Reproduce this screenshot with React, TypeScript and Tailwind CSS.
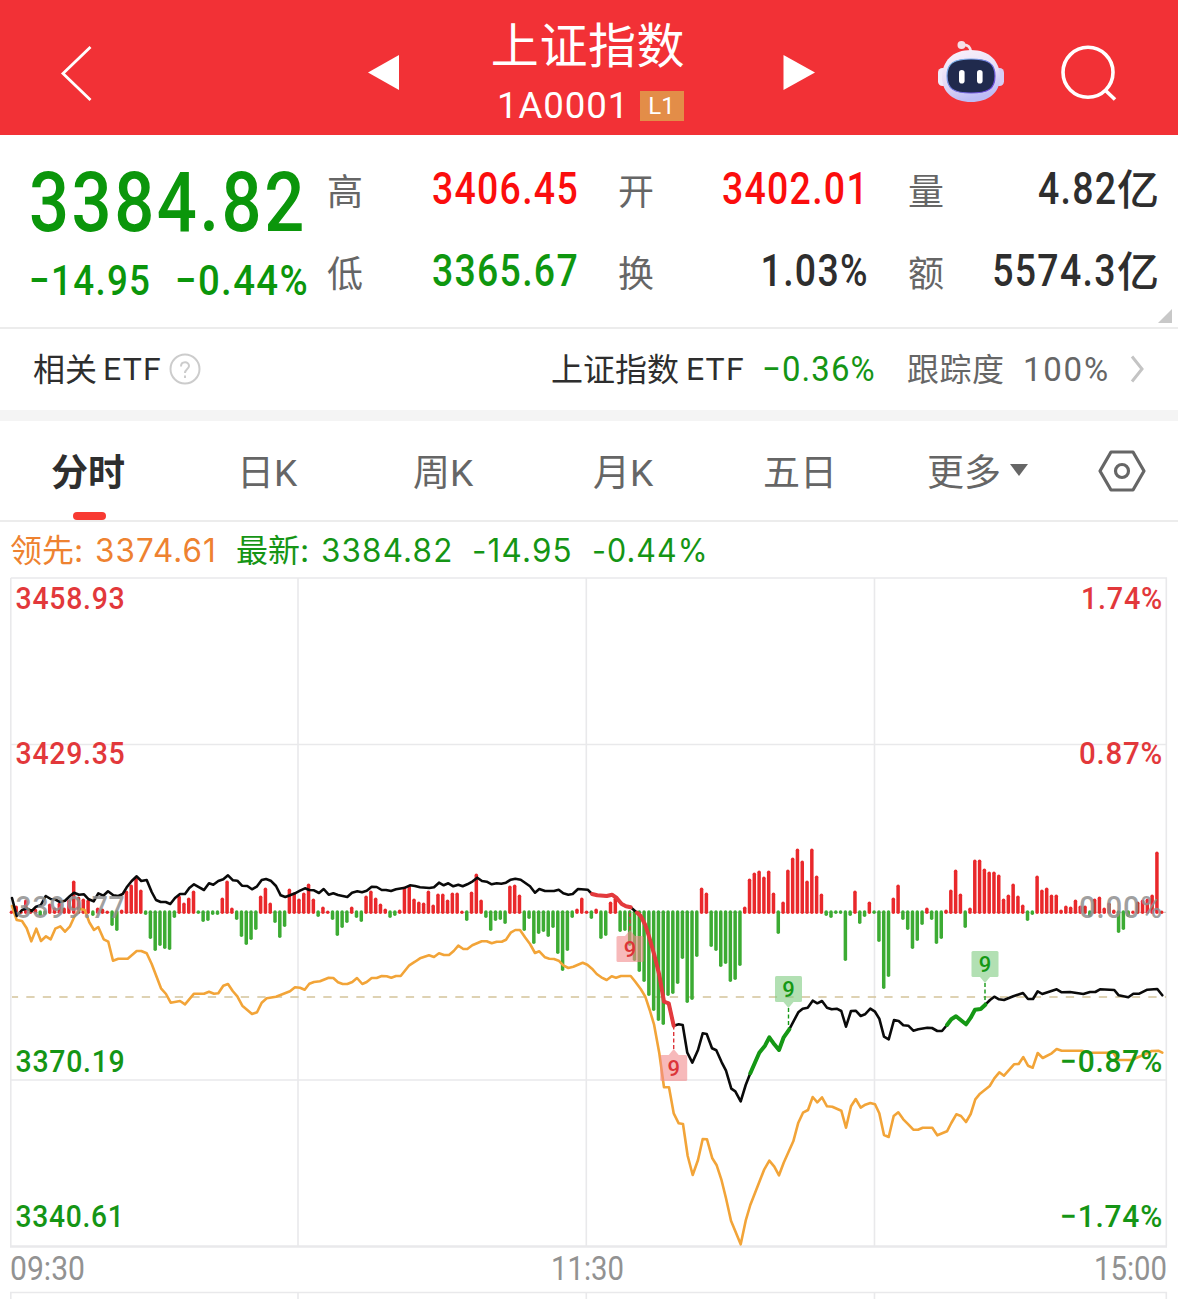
import { clsx } from "clsx";

const X0 = 11.4;
const STEP = 4.793;
const ZERO_Y = 912.3;

// one value per minute, positive = buying, negative = selling
const momentum = [
  1, 6, 1, 12, 1, 3, -3, -2, 8, 4, 9, 4, 12, 31, 15, 13, 12, -3, 4, 3,
  1, -13, -18, 2, 21, 27, 34, 22, -2, -26, -38, -33, -36, -37, -5, 16, 9, 14, 21, -1,
  -9, -8, -2, -2, 14, 31, 4, -7, -24, -32, -27, -17, 16, 24, 9, -10, -25, -14, 23, 19,
  13, 19, 28, 13, -4, 5, 1, -7, -23, -15, -10, 5, -5, -9, 16, 21, 14, 8, 3, -5,
  -3, 2, 25, 26, 13, 10, 9, 21, 7, 18, 18, 12, 19, 19, 1, -8, 20, 38, 12, -5,
  -18, -8, -7, -11, 26, 27, 17, -18, -6, -31, -21, -19, -24, -15, -41, -58, -38, -5, 3, 14,
  1, -6, 3, -26, -23, 10, 14, -19, -18, -33, -48, -59, -69, -83, -98, -108, -112, -83, -81, -71,
  -46, -90, -87, -44, 24, 19, -34, -38, -54, -51, -69, -67, -53, 5, 33, 39, 41, 35, 41, 19,
  -21, 10, 42, 54, 63, 51, 31, 63, 36, 18, -3, -5, -1, -1, -48, -3, 21, -11, -4, 10,
  -1, -29, -76, -64, 14, 27, -7, -17, -36, -28, -12, 4, -7, -31, -26, 2, 22, 42, 18, -15,
  4, 52, 52, 43, 40, 40, 37, 13, 17, 28, 16, 7, -8, -2, 36, 22, 24, 17, 17, 2,
  6, 5, 12, 6, 6, -4, 13, 15, 4, 9, 2, -20, -17, -4, 1, 10, 12, 13, 17, 60, 1,
];

const indexLine =
  "12,898 16.7,916 22,910 26.7,908.5 31.7,911 36,906.7 40.7,905.3 45.7,896 50.7,899 55,899.3 60,902 65,900.7 70,896 74,892.7 79,894.7 84,894.3 88.7,899.3 93.7,901.3 98.3,893.3 103.3,895.7 108,891.3 113.3,895.3 118.3,896 122.7,894 126.7,887.3 131.7,881 136.7,876.3 141.3,881 146.7,880 151.7,892 156,900 160.7,902 165.7,902 170.3,904 175,898 180,894 185,894 189.3,888 194,884.3 199.3,887.3 204,890 209,883.3 213.3,884.7 218.3,881 223.3,879.3 228,875.3 233,880.3 237.3,880.7 242,885.7 247.3,886 252,889.3 256.7,886.7 261.7,880 266,879 270.7,880.7 276,886 280.7,895.3 285.3,897 290,895.3 295,893.3 300,890.7 305,888.3 309.3,890 314,890.3 319,893 323.7,889 328.7,894.7 333.3,893.3 338,895 342.7,896 347.3,897 352,892.7 357.3,891.3 362,892.3 366.7,890.7 371.7,886.7 376.7,887 381.7,890 386,890 391,891 396,889.3 405,887.7 410,885.3 415,886 420,887.3 429.3,888 434,887.3 439,882.7 443.7,885.3 448.3,883.3 453.3,886.3 458.3,884.7 462.7,886.3 467.3,884.3 472.7,881.3 477.3,877.7 482,881 486.7,881.7 491.7,884.3 496.7,883.3 501.3,883.7 506,882.7 510.7,879.7 515.3,878.7 520.7,879.7 525,882.7 530,886.3 535,892.7 539.3,889 545,891 554,891 558.7,889.7 563.3,893.3 568.3,894.7 572.7,894 578,889 587.7,889.7 592,894 597.3,895.3 606.7,896 612,894.7 616.7,898 621.7,904 626,906.3 630.7,907.3 635.3,911.3 640.7,916 645.3,925 649.3,937.3 654.3,955 659.3,975 664,1001.7 668.7,1003.3 673.7,1025.7 678.7,1024.3 682.7,1025 687.3,1052.7 692.3,1062.7 698,1050 702.7,1033.3 706.7,1034 712,1048.3 716.3,1050.3 721.7,1062.3 726,1070.7 731.3,1088.7 735.3,1091.3 740.7,1101.3 745.7,1085 750.3,1073.3 759.3,1052.7 765,1045.7 769.3,1037.3 774.3,1044.3 779,1050 783.7,1037.3 789.3,1029.3 798.3,1012.3 802.7,1008.7 807.7,1007.7 812.7,1000.7 817.3,1003.3 822,1001 827,1007.7 831.7,1009.3 836.7,1008.7 841.3,1011 846,1026.7 851,1011 855.7,1010.7 860.7,1016 865,1014.3 870.3,1008.7 875,1011.7 879.3,1018.7 884,1036.7 888.7,1039.3 894,1020 898.7,1021 903.3,1025.3 908.3,1025.7 913.3,1030.7 918.3,1029.3 927.3,1027.7 932,1028 937.3,1031 942,1031 947,1025 951.3,1019.3 956,1016.3 961,1020.3 966,1024.3 970.7,1017.7 975,1009.7 980.7,1009 985.3,1004.7 990,1000 994.3,996.7 999,999.3 1004,1000 1013.3,996.3 1023,993 1028,999 1033,999 1037.7,991.3 1042.3,994 1056.7,989.3 1061.7,992.3 1070,992 1083.3,994 1090,992 1095.3,992 1100,989.3 1114.3,990 1118.7,995.3 1128.3,997.3 1133.3,993.7 1139.3,993.7 1147.3,989.7 1157.3,989 1162.3,995.3";

const leadLine =
  "12,906 16.7,920 22,921 26.7,928.3 31.3,941.3 36.3,928.7 41,941 46,936.3 50.7,939.3 55.3,928.7 60.3,926.3 65,931.7 70,926.3 74.7,916 80,908.7 84.7,910 89.3,922.3 94,930 98.3,927 103.7,939.3 108.3,941.7 113,960.7 118.3,958.7 127.7,958.7 136.7,951 141.3,951 146.7,953.3 151.7,964 161,988.3 166,994 170.7,1002.7 180,1001 185,1004.3 194,993.7 204,993.7 209,991.7 214,993.7 218.3,993.3 223.3,985.7 228,984 232.7,991 237.3,996.3 242.3,1005.7 252,1014 257,1012.3 261.7,1002.7 266.7,998.3 276,996.7 290,991.3 295,987.3 300,987.7 304.7,989.7 309.3,983.7 314,982 320,981.3 328.7,977.7 333.3,978 338,982.3 342.7,984 347.3,984 352.3,982 357,978 362.3,984 366.7,982 371.7,978 376.7,978 381.7,976 386.7,976.3 391.3,977.7 396,976 400.7,976 409.3,965.3 415,961.7 420,958.3 429,955.3 434,957 439,953.3 444,955 449,955 453.7,951 458.3,945.7 463.3,949 467.3,949 472.3,945.3 481.7,941.3 486.7,941.3 491.7,943.3 496.7,941.7 501.7,941.7 506,939.7 510.7,932.7 515.3,930 520,930 525,937.3 530,944 535,953 539.3,951.3 545,957.3 549.3,958.7 554,959 558.7,960.7 563.3,965.3 568.3,968 573.3,966.7 582.7,962.7 587.3,964.7 592,968.7 596.7,974 601.3,977.3 606.7,980 611.7,976.3 616,977.7 621,976 630.7,976 635.3,981.7 640.7,989 645.3,996.7 649.7,1010 654,1024.3 659.3,1053.3 664,1087.3 669,1087.3 673.7,1113.3 678.7,1123.3 683,1124 687.7,1156 692.7,1175 698,1160 702.7,1139 707,1139.3 712.3,1158.3 716.7,1165.3 721.3,1179.3 726,1198.3 731,1220.7 740.7,1244.3 745.7,1220.7 750.3,1205 759.3,1182 764.3,1169.3 769.3,1160.7 774.3,1166.7 779,1175.3 783.7,1162.7 793.3,1141.3 798.3,1122.7 803,1112.7 808,1110 812.7,1097 817.3,1102.3 822,1097.3 827,1106.3 832.3,1106.7 841.3,1110.7 846,1127.7 851,1106.3 855.7,1099 860.7,1107.7 865.3,1104.7 870.3,1103 875,1104.3 879.3,1113.3 884,1135 888.7,1137 893.7,1116 898.3,1112.3 903.3,1119.3 908.3,1124.3 913.3,1129.7 918,1129.7 922.7,1127.7 932.3,1127.7 937.3,1135.3 947,1131.3 951.3,1123 956.3,1114.3 961,1116 966,1122 970.7,1114 975.3,1099.3 980,1093.7 989.7,1086 994.3,1078.3 999.3,1072.3 1004,1075.7 1014,1064.3 1018.7,1064 1023.3,1057 1028,1065.7 1032.7,1067.7 1037.7,1053 1042.7,1058 1051.7,1053.3 1056.7,1049 1061.7,1050.7 1081.7,1050.7 1090,1052.7 1113.3,1052.7 1118.3,1060 1133,1060 1136.7,1057.7 1143.3,1055 1151.7,1051 1158.3,1050.7 1162.3,1052.7";

const trends = [
  { color: "#e33a3d", points: "592,894 597.3,895.3 606.7,896 612,894.7 616.7,898 621.7,904 626,906.3 630.7,907.3" },
  { color: "#e33a3d", points: "637,912.5 640.7,916 645.3,925 649.3,937.3 654.3,955 659.3,975 664,1001.7 668.7,1003.3 673.7,1025.7" },
  { color: "#159815", points: "750.3,1073.3 759.3,1052.7 765,1045.7 769.3,1037.3 774.3,1044.3 779,1050 783.7,1037.3 789.3,1029.3" },
  { color: "#159815", points: "947,1025 951.3,1019.3 956,1016.3 961,1020.3 966,1024.3 970.7,1017.7 975,1009.7 980.7,1009 985.3,1004.7" },
];

const axisLabels = [
  { text: "3458.93", x: 15.5, y: 608.5, w: 110, fill: "#e2383b" },
  { text: "3429.35", x: 15.5, y: 763.5, w: 110, fill: "#e2383b" },
  { text: "3370.19", x: 15.5, y: 1072, w: 110, fill: "#159515" },
  { text: "3340.61", x: 15.5, y: 1227, w: 109, fill: "#159515" },
  { text: "1.74%", x: 1081, y: 608.5, w: 82, fill: "#e2383b" },
  { text: "0.87%", x: 1079, y: 763.5, w: 84, fill: "#e2383b" },
  { text: "−0.87%", x: 1060, y: 1072, w: 103, fill: "#159515" },
  { text: "−1.74%", x: 1060, y: 1227, w: 103, fill: "#159515" },
];

const times = [
  { text: "09:30", x: 10, w: 75 },
  { text: "11:30", x: 551, w: 73 },
  { text: "15:00", x: 1094, w: 73 },
];

type MarkerProps = { x: number; y: number; down?: boolean; green?: boolean; lineTo: number };

function Marker({ x, y, down, green, lineTo }: MarkerProps) {
  const color = green ? "#159815" : "#dc3438";
  const box = green ? "#7fcb80" : "#f28a8c";
  const edge = down ? y + 13 : y - 13;
  const tip = down ? edge + 6 : edge - 6;
  return (
    <g>
      <line x1={x} x2={x} y1={tip} y2={lineTo} stroke={color} strokeWidth="1.4" strokeDasharray="4 2.5" />
      <g fill={box} fillOpacity="0.6">
        <rect x={x - 13.5} y={y - 13} width="27" height="26" rx="1.5" />
        <path d={`M${x - 5} ${edge}L${x} ${tip}L${x + 5} ${edge}Z`} />
      </g>
      <text x={x} y={y + 8} fontSize="22" fontWeight="500" textAnchor="middle" fill={color}>
        9
      </text>
    </g>
  );
}

function Chart() {
  return (
    <svg className="block w-full h-[729px] font-[Roboto,sans-serif]" viewBox="0 570 1178 729">
      <g stroke="#e9e9eb" strokeWidth="1.6" fill="none">
        <path d="M10.8 578H1166.3V1246M10.8 578V1246M298 578V1246M586.3 578V1246M874.5 578V1246" />
        <path d="M11 744.5H1166M11 1080H1166" />
        <path d="M10 1246.5H1167" strokeWidth="2.6" />
        <path d="M10 1292.5H1167M10.8 1292V1299M298 1292V1299M586.3 1292V1299M874.5 1292V1299M1166.3 1292V1299" />
      </g>
      <path d="M12 912.3H1166" stroke="#bbb" strokeWidth="1" strokeDasharray="2 2" />
      <path d="M12 997H1166" stroke="#d3c39b" strokeWidth="1.6" strokeDasharray="8.3 8.2" strokeDashoffset="2.2" />

      {momentum.map((v, i) => {
        const x = X0 + i * STEP;
        return (
          <line
            key={i}
            x1={x}
            x2={x}
            y1={v > 0 ? ZERO_Y : ZERO_Y - 0.3}
            y2={ZERO_Y - v + (v > 0 ? 1 : -1)}
            stroke={v > 0 ? "#e9282b" : "#3cab33"}
            strokeWidth="3.5"
            strokeLinecap="round"
          />
        );
      })}

      <g fill="none" strokeLinejoin="round" strokeLinecap="round">
        <polyline points={leadLine} stroke="#f2a438" strokeWidth="2.6" />
        <polyline points={indexLine} stroke="#0a0a0a" strokeWidth="2.6" />
        {trends.map((t) => (
          <polyline key={t.points} points={t.points} stroke={t.color} strokeWidth="4" />
        ))}
      </g>

      <Marker x={630} y={949} lineTo={910} />
      <Marker x={673.7} y={1068} lineTo={1027} />
      <Marker x={788.5} y={989} down green lineTo={1028} />
      <Marker x={985} y={964} down green lineTo={1003} />

      <g fontSize="31" fontWeight="500" letterSpacing="0.8">
        {axisLabels.map((l) => (
          <text key={l.text} x={l.x} y={l.y} textLength={l.w} lengthAdjust="spacingAndGlyphs" fill={l.fill}>
            {l.text}
          </text>
        ))}
        <text x="15.5" y="917.5" textLength="110" lengthAdjust="spacingAndGlyphs" fill="#8f8f8f" fillOpacity="0.85">
          3399.77
        </text>
        <text x="1079" y="917.5" textLength="84" lengthAdjust="spacingAndGlyphs" fill="#8f8f8f" fillOpacity="0.85">
          0.00%
        </text>
      </g>
      <g fontSize="33" fill="#929292">
        {times.map((t) => (
          <text key={t.text} x={t.x} y="1280" textLength={t.w} lengthAdjust="spacingAndGlyphs">
            {t.text}
          </text>
        ))}
      </g>
    </svg>
  );
}

function Robot() {
  return (
    <svg className="w-[68px] h-[64px]" viewBox="937 40 68 64">
      <defs>
        <linearGradient id="shell" x1="0" y1="0" x2="0.3" y2="1">
          <stop offset="0" stopColor="#fbf3fb" />
          <stop offset="0.6" stopColor="#e6dcf6" />
          <stop offset="1" stopColor="#bdbcf5" />
        </linearGradient>
        <linearGradient id="rim" x1="0" y1="0" x2="1" y2="1">
          <stop offset="0" stopColor="#7fc4ee" />
          <stop offset="1" stopColor="#6a35d8" />
        </linearGradient>
      </defs>
      <path d="M962 45Q970 44 971 52" fill="none" stroke="#f6dfe8" strokeWidth="2.6" />
      <circle cx="961.5" cy="45" r="4" fill="#f6dfe8" />
      <rect x="938" y="68" width="10" height="18" rx="4.5" fill="#f0eafa" />
      <rect x="994" y="68" width="10" height="18" rx="4.5" fill="#d6cdf4" />
      <path d="M971 50C989 50 1000 61 1000 77C1000 93 988 102 971 102C954 102 942 93 942 77C942 61 953 50 971 50Z" fill="url(#shell)" />
      <path d="M971 59C988 59 995 63 995 76C995 89 988 93 971 93C954 93 947 89 947 76C947 63 954 59 971 59Z" fill="#202a4d" stroke="url(#rim)" strokeWidth="1.2" />
      <rect x="959" y="70" width="5.6" height="13.5" rx="2.8" fill="#fff" />
      <rect x="977" y="70" width="5.6" height="13.5" rx="2.8" fill="#fff" />
    </svg>
  );
}

function Header() {
  return (
    <header className="h-[135px] bg-[#f23136] text-white flex items-start">
      <svg className="w-8 h-14 ml-[60px] mt-[46px]" viewBox="0 0 32 56" fill="none" stroke="#fff" strokeWidth="2.8">
        <path d="M30.5 1L3 27.5L30.5 54" />
      </svg>
      <svg className="w-8 h-9 ml-[276px] mt-[55px]" viewBox="0 0 32 36" fill="#fff">
        <path d="M0 17.5L31 0V35Z" />
      </svg>
      <div className="w-[384px] h-full flex flex-col items-center">
        <h1 className="text-[48px] leading-[54px] mt-[20px] mr-[8px] tracking-[0.6px]">上证指数</h1>
        <div className="flex items-center h-[30px] mt-[17px] mr-[4px]">
          <span className="text-[37px] leading-none w-[131px] -mt-[2px] whitespace-nowrap">
            <span className="inline-block origin-left scale-x-[0.99] tracking-[0.9px]">1A0001</span>
          </span>
          <span className="w-11 h-[30px] ml-3 bg-[#e38d48] text-[24px] leading-[30px] text-center">L1</span>
        </div>
      </div>
      <svg className="w-8 h-9 mt-[55px] -ml-px" viewBox="0 0 32 36" fill="#fff">
        <path d="M0.5 0V35L32 17.5Z" />
      </svg>
      <div className="ml-[122px] mt-10">
        <Robot />
      </div>
      <svg className="w-[58px] h-[58px] ml-[55px] mt-[44px]" viewBox="1060 44 58 58" fill="none" stroke="#fff" strokeWidth="3.6">
        <circle cx="1088" cy="72.3" r="25" />
        <path d="M1105 90L1115 99.5" />
      </svg>
    </header>
  );
}

const stats = [
  { label: "高", value: "3406.45", className: "text-[#fb0d0d]" },
  { label: "开", value: "3402.01", className: "text-[#fb0d0d]" },
  { label: "量", value: "4.82", unit: "亿", className: "text-[#2e2e2e]" },
  { label: "低", value: "3365.67", className: "text-[#0f970f]" },
  { label: "换", value: "1.03%", className: "text-[#2e2e2e]" },
  { label: "额", value: "5574.3", unit: "亿", className: "text-[#2e2e2e]" },
];

function Quote() {
  return (
    <section className="relative h-[194px] flex border-b-2 border-[#ececec]">
      <div className="w-[327px] pl-[29px] text-[#0b960b] font-medium whitespace-nowrap">
        <div className="text-[84px] leading-[84px] mt-[26px] tracking-[3px] origin-left scale-x-[0.84]">3384.82</div>
        <div className="flex text-[42px] leading-[50px] mt-[11px] tracking-[1.5px]">
          <div className="w-[146px]">
            <div className="origin-left scale-x-[0.875]">−14.95</div>
          </div>
          <div className="w-[130px]">
            <div className="origin-left scale-x-[0.913]">−0.44%</div>
          </div>
        </div>
      </div>
      <div className="grid grid-cols-[252px_251px_251px] gap-x-[39px] auto-rows-[82px] pt-[14px]">
        {stats.map((s) => (
          <div key={s.label} className="flex items-center justify-between">
            <span className="text-[36px] text-[#666] pt-[6px]">{s.label}</span>
            <span className={clsx("flex items-center text-[43.5px] font-medium whitespace-nowrap", s.className)}>
              <span className="origin-right scale-x-[0.86] tracking-[1.5px]">{s.value}</span>
              {s.unit && <span className="text-[42px]">{s.unit}</span>}
            </span>
          </div>
        ))}
      </div>
      <svg className="absolute right-[6px] bottom-[4px] w-[14px] h-[14px]" viewBox="0 0 14 14" fill="#c8c8c8">
        <path d="M14 0V14H0Z" />
      </svg>
    </section>
  );
}

function RelatedEtf() {
  return (
    <section className="h-[92px] border-b-[11px] border-[#f4f4f4] flex items-center text-[32px] text-[#2e2e2e] whitespace-nowrap">
      <span className="ml-[33px] pt-px">相关</span>
      <span className="ml-[6px] pb-px tracking-[1.2px]">ETF</span>
      <svg className="w-8 h-8 ml-[7px] -mt-[2px]" viewBox="0 0 32 32" fill="none" stroke="#ccc" strokeWidth="2">
        <circle cx="16" cy="16" r="14.5" />
        <path d="M12 13.5C12 8 20 8 20 13C20 16 16 16 16 20" />
        <path d="M16 22.5V25" />
      </svg>
      <div className="flex items-center ml-[350px]">
        <span className="w-[130px] pt-px">上证指数</span>
        <span className="w-[81px] pl-[5px] pb-px tracking-[1.2px]">ETF</span>
        <span className="w-[145px] pt-px text-[35px] text-[#159515]">
          <span className="inline-block origin-left scale-x-[0.94] tracking-[1.2px]">−0.36%</span>
        </span>
        <span className="w-[116px] pt-px text-[#666] tracking-[0.5px]">跟踪度</span>
        <span className="w-[107px] pt-px text-[33px] text-[#666] tracking-[1.8px]">100%</span>
        <svg className="w-4 h-7 -mt-[2px]" viewBox="0 0 16 28" fill="none" stroke="#c4c4c4" strokeWidth="3">
          <path d="M2 1.5L12 14L2 26.5" />
        </svg>
      </div>
    </section>
  );
}

function Tabs() {
  return (
    <nav className="h-[101px] border-b-2 border-[#ececec] flex items-stretch text-[37px] leading-[106px] text-[#666] whitespace-nowrap">
      <div className="w-[186px] ml-[51px] relative text-[#2e2e2e] font-bold">
        分时
        <span className="absolute left-[22px] bottom-0 w-[33px] h-2 rounded-full bg-[#f83a32]" />
      </div>
      <div className="w-[176px]">日K</div>
      <div className="w-[180px]">周K</div>
      <div className="w-[170px]">月K</div>
      <div className="w-[164px]">五日</div>
      <div className="w-[171px] flex items-start">
        更多
        <svg className="w-[18px] h-3 ml-[9px] mt-[43px]" viewBox="0 0 18 12" fill="#666">
          <path d="M0 0H18L9 12Z" />
        </svg>
      </div>
      <svg className="w-12 h-11 self-center" viewBox="0 0 48 44" fill="none" stroke="#666" strokeWidth="3.2">
        <path d="M13 3H35L46 22L35 41H13L2 22Z" strokeLinejoin="round" />
        <circle cx="24" cy="22" r="6.5" />
      </svg>
    </nav>
  );
}

export default function App() {
  return (
    <div className="w-[1178px] h-[1299px] overflow-hidden bg-white font-[Roboto,'Noto_Sans_CJK_SC',sans-serif]">
      <Header />
      <Quote />
      <RelatedEtf />
      <Tabs />
      <div className="h-[48px] pt-[9px] flex items-center pl-[10px] text-[32px] whitespace-nowrap font-[Inter,'Noto_Sans_CJK_SC',sans-serif]">
        <span className="w-[85px] text-[#ee8230]">领先:</span>
        <span className="w-[141px] text-[#ee8230]">
          <span className="inline-block origin-left scale-x-[0.98] tracking-[1.1px]">3374.61</span>
        </span>
        <span className="w-[85px] text-[#159515]">最新:</span>
        <span className="w-[151px] text-[#159515]">
          <span className="inline-block origin-left scale-x-[0.98] tracking-[1.2px]">3384.82</span>
        </span>
        <span className="w-[120px] text-[#159515]">
          <span className="inline-block origin-left scale-x-[0.98] tracking-[1.2px]">-14.95</span>
        </span>
        <span className="text-[#159515]">
          <span className="inline-block origin-left scale-x-[0.95] tracking-[1.1px]">-0.44%</span>
        </span>
      </div>
      <Chart />
    </div>
  );
}
